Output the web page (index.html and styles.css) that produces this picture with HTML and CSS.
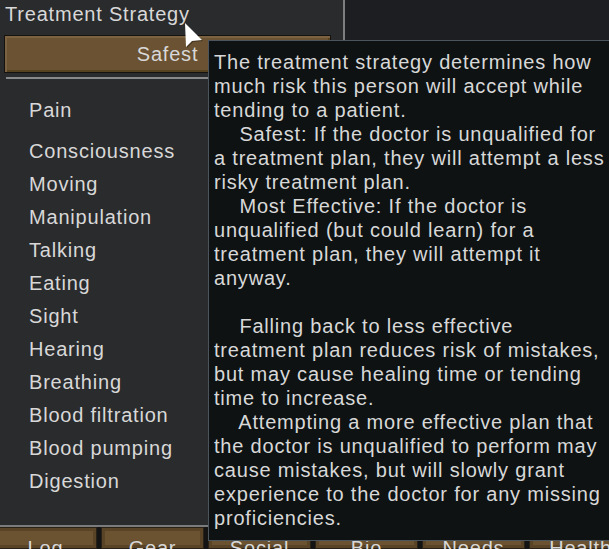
FILE: index.html
```html
<!DOCTYPE html>
<html lang="en">
<head>
    <meta charset="UTF-8">
    <title>Health</title>
    <link rel="stylesheet" href="styles.css">
</head>
<body>
    <div class="screen">
        <div class="main">
            <section class="health-panel">
                <div class="strategy-label">Treatment Strategy</div>
                <button class="strategy-btn">Safest</button>
                <hr class="divider">
                <ul class="capacities">
                    <li class="pain">Pain</li>
                    <li>Consciousness</li>
                    <li>Moving</li>
                    <li>Manipulation</li>
                    <li>Talking</li>
                    <li>Eating</li>
                    <li>Sight</li>
                    <li>Hearing</li>
                    <li>Breathing</li>
                    <li>Blood filtration</li>
                    <li>Blood pumping</li>
                    <li>Digestion</li>
                </ul>
            </section>
            <section class="body-view"></section>
        </div>

        <nav class="tabs">
            <div class="tab">Log</div>
            <div class="tab">Gear</div>
            <div class="tab">Social</div>
            <div class="tab">Bio</div>
            <div class="tab">Needs</div>
            <div class="tab">Health</div>
        </nav>

        <div class="tooltip">
<p>The treatment strategy determines how
much risk this person will accept while
tending to a patient.
    Safest: If the doctor is unqualified for
a treatment plan, they will attempt a less
risky treatment plan.
    Most Effective: If the doctor is
unqualified (but could learn) for a
treatment plan, they will attempt it
anyway.

    Falling back to less effective
treatment plan reduces risk of mistakes,
but may cause healing time or tending
time to increase.
    Attempting a more effective plan that
the doctor is unqualified to perform may
cause mistakes, but will slowly grant
experience to the doctor for any missing
proficiencies.</p>
        </div>

        <!-- mouse pointer -->
        <svg class="pointer" width="22" height="30" viewBox="0 0 22 30">
            <polygon points="1,1 2,25 8,19 18,18" fill="#000" opacity="0.35" transform="translate(1,1)"/>
            <polygon points="1,1 2,25 8,19 18,18" fill="#fff"/>
        </svg>
    </div>
</body>
</html>
```

FILE: styles.css
```css
body {
    margin: 0;
    background-color: #1d1e22;
    color: #d8d8d8;
    font-family: "Liberation Sans", Arial, sans-serif;
    font-size: 20px;
    letter-spacing: 0.8px;
    overflow: hidden;
}

.screen {
    position: relative;
    width: 609px;
    height: 549px;
    display: flex;
    flex-direction: column;
    overflow: hidden;
}

.main {
    display: flex;
    height: 525px;
}

.health-panel {
    width: 345px;
    box-sizing: border-box;
    background-color: #2a2b2d;
    border-right: 2px solid #7d7e80;
}

.body-view {
    flex: 1;
}

.strategy-label {
    padding: 1px 0 0 5px;
    line-height: 26px;
}

.strategy-btn {
    display: block;
    width: 327px;
    height: 38px;
    margin: 8px 0 0 4px;
    background-color: #6a5232;
    border: 1px solid #151210;
    box-shadow: inset 2px 2px 0 #7b6240, inset -2px -2px 0 #56421f;
    color: #d8d8d8;
    font: inherit;
    letter-spacing: inherit;
    padding: 0;
}

.divider {
    margin: 4px 3px 0 6px;
    border: none;
    height: 2px;
    background-color: #88898b;
}

.capacities {
    list-style: none;
    margin: 0;
    padding: 15px 0 0 29px;
}

.capacities li {
    height: 33px;
    line-height: 33px;
}

.capacities .pain {
    margin-bottom: 8px;
}

.tabs {
    display: flex;
    gap: 4px;
    margin-left: -6px;
    border-top: 2px solid #7a7b7d;
    height: 22px;
    background-color: #141414;
}

.tab {
    flex: 0 0 103px;
    background-color: #6b5331;
    box-shadow: inset 0 0 0 1px #2a2216, inset 0 0 0 4px #5a4427;
    text-align: center;
    padding-top: 9px;
    line-height: 24px;
}

.tooltip {
    position: absolute;
    left: 208px;
    top: 40px;
    width: 420px;
    height: 501px;
    box-sizing: border-box;
    background-color: #0e1213;
    border: 1px solid #4c555b;
    padding: 9px 0 0 5px;
}

.tooltip p {
    margin: 0;
    white-space: pre;
    line-height: 24px;
}

.pointer {
    position: absolute;
    left: 184px;
    top: 22px;
}
```
